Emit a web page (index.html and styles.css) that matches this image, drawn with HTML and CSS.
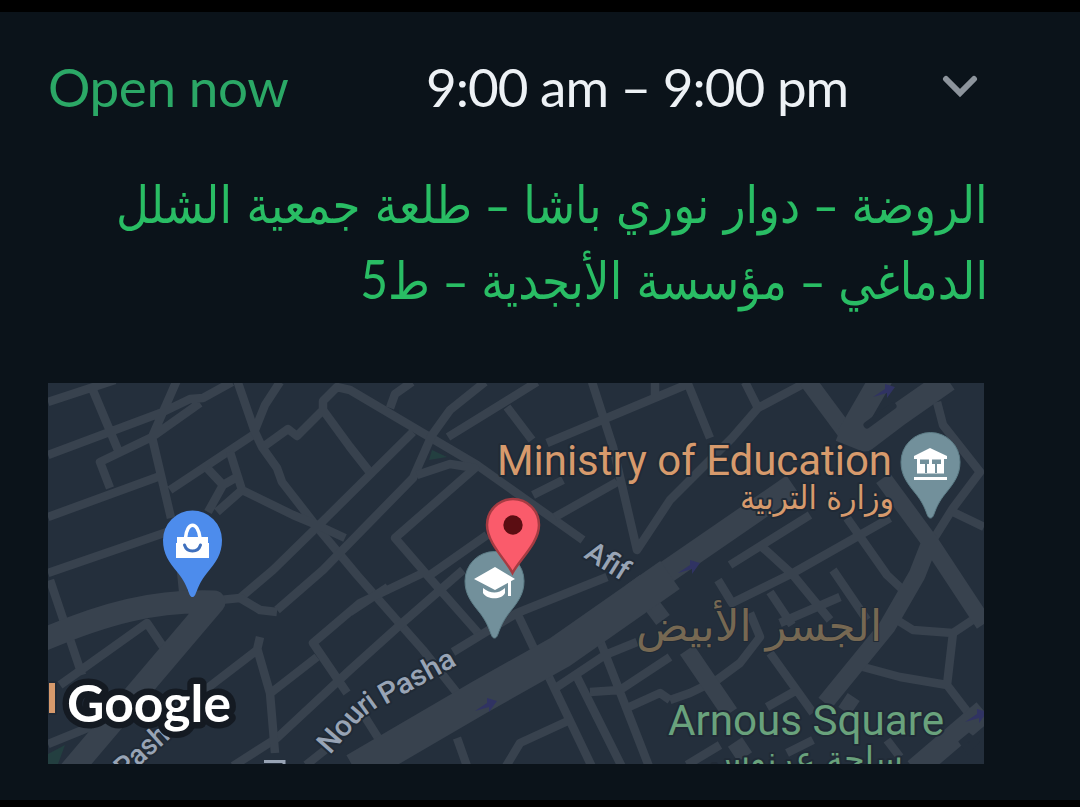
FILE: index.html
```
<!DOCTYPE html>
<html lang="en">
<head>
<meta charset="utf-8">
<title>Business hours and location</title>
<link rel="stylesheet" href="styles.css">
</head>
<body>
<main class="screen">
  <section class="hours">
    <span class="status">Open now</span>
    <span class="time">9:00 am – 9:00 pm</span>
    <svg class="chevron" viewBox="0 0 36 24"><path d="M4 4 18 18 32 4"/></svg>
  </section>
  <address class="address" dir="rtl" lang="ar">
    <span class="line line-one">الروضة – دوار نوري باشا – طلعة جمعية الشلل</span>
    <span class="line line-two">الدماغي – مؤسسة الأبجدية – ط<span class="digit">5</span></span>
  </address>
  <svg class="map" viewBox="48 383 936 381">
    <g class="park"><path d="M429 460 432 450 447 457Z M48 764 48 754 65 745 58 764Z"/></g>
    <g class="roads">
      <path d="M48 402 115 380M48 455 163 412 190 399 203 398 232 382M92 388 118 450M177 380 152 437 171 518M152 437 200 403M152 437 100 462 110 488M48 517 163 475M48 573 170 531M170 490 253 435"/>
      <path d="M237 380 255 432 262 447 277 468 282 482 317 527 357 575 423 650 457 693M280 382 265 405 255 430M263 447 288 429 297 436 323 410 323 401 337 387 350 390 477 465 583 540M323 410 350 447 372 475"/>
      <path d="M230 452 242 490 293 515 317 525 345 538M207 468 223 485 208 512M242 490 217 512M223 485 237 477M240 598 273 570 317 527 413 432M277 610 323 570 413 478 432 435 450 410 485 382"/>
      <path d="M412 382 395 394 390 408M448 437 537 382M507 407 532 440M547 443 688 384 710 438M592 382 613 447 637 550 670 500 732 438 758 408 805 383M655 382V400M745 382 758 408M417 475 450 464 475 468 395 538 427 575 480 635M430 575 487 535M463 570 400 625 350 670 277 738 233 766M423 573 360 603 313 643 347 693M350 612 388 587M533 495 563 480M555 517 617 482"/>
      <path d="M937 402 943 425 980 472 953 508 933 540M953 512 984 527M730 565 810 515M760 545 793 575 830 620M718 580 732 603 793 573 890 518M847 518 887 575 903 590M833 570 867 620M770 592 792 625M780 623 840 597M750 613 760 637 740 663 717 680 690 693 670 700M770 653 813 713M767 707 797 690M863 667 900 677 947 685 973 719M897 620 913 630 953 633 980 615M953 633 947 685M687 765 720 745M787 753 813 740M887 740 900 757"/>
      <path d="M453 652 517 613 607 577M518 615 537 655M547 673 593 769M577 677 623 769M597 633 650 769M557 687 605 655 637 642M590 692 620 690 670 657M627 708 660 693 670 700M505 768 520 743 570 720M457 738 468 769M365 717 382 744"/>
      <path d="M50 580 82 675M60 685 147 623 170 657M260 637 257 650 205 690M257 648 270 693 275 753M272 692 317 657M48 744 90 727M306 765 325 750M181 570 184 600M220 600 240 598 260 610 277 612"/>
    </g>
    <g class="roads mid"><path d="M883 478 930 542 984 624M930 542 917 575 887 627 825 703M687 650 730 713M633 580 663 620M807 380 850 438M843 700 855 708M735 742 745 757"/></g>
    <g class="roads wide"><path d="M882 377 848 436M948 380 898 415 865 440 840 430M793 485 655 580M984 711 915 770M40 641 C105 613 155 600 214 602L68 774"/></g>
    <path class="avenue" d="M355 770 480 697 560 652 670 575"/>
    <path class="hole" d="M867 425 893 406M963 742 969 737 975 742 968 749Z"/>
    <g class="one-way"><path id="arrow" d="M475 711 487 703V698L497 701 489 712V707Z"/><use href="#arrow" x="203" y="-138"/><use href="#arrow" x="398" y="-314"/><use href="#arrow" x="490" y="11"/></g>

    <g class="label street">
      <text transform="translate(583 557) rotate(32)" textLength="46" lengthAdjust="spacingAndGlyphs">Afif</text>
      <text transform="translate(330 755) rotate(-49)" textLength="54" lengthAdjust="spacingAndGlyphs">Nou</text>
      <text transform="translate(365 716) rotate(-36)" textLength="17" lengthAdjust="spacingAndGlyphs">ri</text>
      <text transform="translate(385 705) rotate(-29)" textLength="83" lengthAdjust="spacingAndGlyphs">Pasha</text>
      <text transform="translate(125 779) rotate(-42)" textLength="77" lengthAdjust="spacingAndGlyphs">Pasha</text>
    </g>
    <path class="label-edge" d="M264 761.500H284V766"/>
    <g class="label place">
      <text x="497" y="475" textLength="395" lengthAdjust="spacingAndGlyphs">Ministry of Education</text>
      <text class="ar" x="740" y="509" font-size="33" textLength="154" lengthAdjust="spacingAndGlyphs">وزارة التربية</text>
      <path d="M49 683H55V713H49Z"/>
    </g>
    <text class="label district ar" x="636" y="641" textLength="246" lengthAdjust="spacingAndGlyphs">الجسر الأبيض</text>
    <g class="label square">
      <text x="668" y="735" textLength="276" lengthAdjust="spacingAndGlyphs">Arnous Square</text>
      <text class="ar" x="709" y="770" font-size="33" textLength="194" lengthAdjust="spacingAndGlyphs">ساحة عرنوس</text>
    </g>

    <g class="pin shop">
      <path d="M192.500 597C188 597 190 588 178 573C169 562 163 554 163 540A29.500 29.500 0 0 1 222 540C222 554 216 562 207 573C195 588 197 597 192.500 597Z"/>
      <path class="glyph" d="M177 537H208V543H209V558H176V543H177Z"/>
      <path class="handle" d="M185.500 538C187 521 198 521 200 538"/>
      <path class="smile" d="M184.500 545C187 553 198 553 200.500 545"/>
    </g>
    <g class="pin civic">
      <path d="M494.500 638C490 638 492 629 480 613C471 602 465 594 465 581A29.500 29.500 0 0 1 524 581C524 594 518 602 509 613C497 629 499 638 494.500 638Z"/>
      <path class="glyph" d="M474 579 495 567 515 579 495 590ZM483 588C491 594 498 594 505 588V593C502 600 487 600 483 593Z"/>
      <path class="tassel" d="M509.500 580V596"/>
    </g>
    <g class="pin civic">
      <path d="M930.500 518C926 518 928 509 916 494C907 483 901 475 901 462A29.500 29.500 0 0 1 960 462C960 475 954 483 945 494C933 509 935 518 930.500 518Z"/>
      <path class="glyph" d="M914 456 930 448 947 456V459H914ZM917 458H944V473.500H917ZM914 477H947V480H914Z"/>
      <path class="gaps" d="M920 459.500H929V464H927V473H925V464H920ZM932 459.500H941V464H937V473H935V464H932Z"/>
    </g>
    <g class="target">
      <path d="M512.500 573C506 560 487 543 487 525A26 26 0 0 1 539 525C539 543 519 560 512.500 573Z"/>
      <circle cx="513" cy="525" r="9.700"/>
    </g>
    <text class="brand" x="67" y="722" textLength="164" lengthAdjust="spacingAndGlyphs">Google</text>
  </svg>
</main>
</body>
</html>
```
FILE: styles.css
```
* { box-sizing: border-box; }
body { margin: 0; background: #000; }
.screen {
  width: 1080px;
  height: 807px;
  padding: 0 96px 0 48px;
  background: #0b131a;
  border-top: 12px solid #000;
  border-bottom: 7px solid #000;
  overflow: hidden;
}
.hours {
  display: flex;
  align-items: center;
  height: 154px;
  padding-bottom: 4px;
  font: 400 53px/64px Lato, sans-serif;
  white-space: nowrap;
}
.status { width: 378px; color: #2ba866; letter-spacing: -0.4px; }
.time { width: 516px; color: #edf1f5; letter-spacing: -1px; }
.chevron { width: 36px; height: 24px; margin-top: -1px; fill: none; stroke: #8d949c; stroke-width: 6; stroke-linecap: round; }
.address {
  height: 217px;
  padding-top: 2px;
  color: #29bd64;
  font: normal 400 51px/76px "DejaVu Sans", sans-serif;
}
.line { display: block; width: max-content; white-space: nowrap; transform-origin: right center; transform: translateX(4px) scaleX(0.888); }
.digit { font-family: Lato, sans-serif; font-size: 54px; line-height: 1; }
.map { display: block; width: 936px; height: 381px; background: #242f3c; overflow: hidden; }
.roads { fill: none; stroke: #38424e; stroke-width: 8.500; stroke-linejoin: round; }
.mid { stroke-width: 17; }
.wide { stroke-width: 23; }
.avenue { fill: none; stroke: #38424e; stroke-width: 34; stroke-linejoin: round; }
.hole { fill: #242f3c; stroke: #242f3c; stroke-width: 7; stroke-linecap: round; }
.park { fill: #233f40; }
.one-way { fill: #303363; }
.label { font-family: Roboto, sans-serif; paint-order: stroke; stroke: #202a36; stroke-width: 4px; stroke-linejoin: round; }
.ar { font-family: "DejaVu Sans", sans-serif; }
.street { fill: #98a4b5; font-size: 29px; font-weight: 500; }
.label-edge { fill: none; stroke: #98a4b5; stroke-width: 3; }
.place { fill: #d79a6c; font-size: 42px; }
.district { fill: #766852; font-size: 43px; stroke-width: 2px; }
.square { fill: #69a27c; font-size: 42px; }
.shop { fill: #4d8cec; }
.civic { fill: #72909b; stroke: #5d7d87; stroke-width: 1; }
.glyph { fill: #fff; stroke: none; }
.handle { fill: none; stroke: #fff; stroke-width: 3.500; }
.smile { fill: none; stroke: #3f70bd; stroke-width: 3; stroke-linecap: round; }
.tassel { stroke: #fff; stroke-width: 3; }
.gaps { fill: #72909b; stroke: none; }
.target { fill: #fa5b6b; stroke: #a63b42; stroke-width: 2.500; }
.target circle { fill: #5b0d12; stroke: none; }
.brand { fill: #fff; font: 700 52px Lato, sans-serif; paint-order: stroke; stroke: #141a22; stroke-width: 13px; stroke-linejoin: round; }
```
